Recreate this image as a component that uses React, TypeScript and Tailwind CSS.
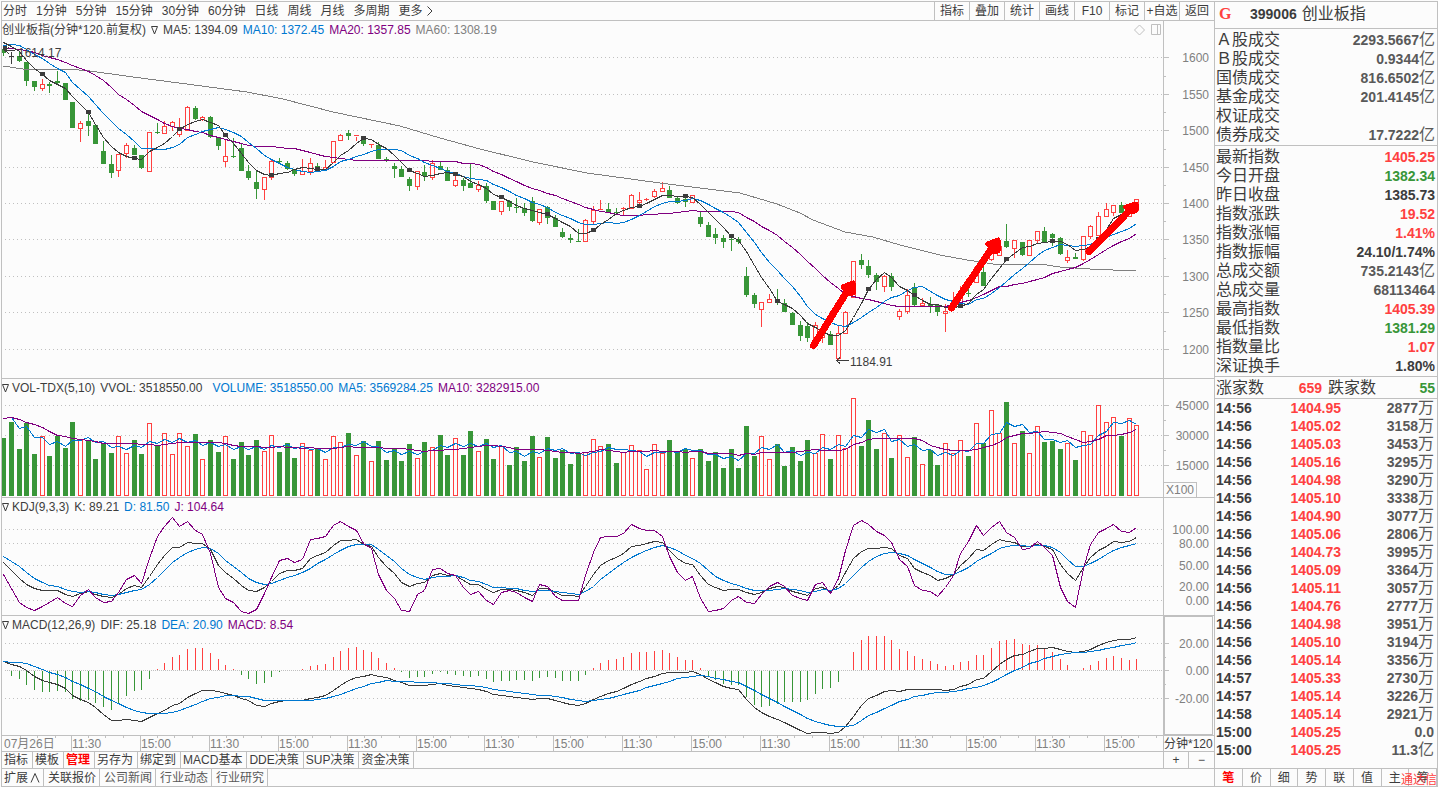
import * as React from "react";
import clsx from "clsx";

const RED = "#ff4040";
const GREEN = "#389638";
const DARK = "#3c3c3c";
const BLUE = "#0078d0";
const PURPLE = "#800080";
const GRAY = "#808080";
const LINE = "#c0c0c0";

const PLOT_LEFT = 2;
const PLOT_WIDTH = 1161;

// [direction, high, top, bottom, low]
type Candle = [number, number, number, number, number];

const CANDLES: Candle[] = [
  [-1, 48, 49, 53, 56], [0, 52, 56, 57, 64], [-1, 52, 56, 61, 62], [-1, 62, 62, 81, 86],
  [-1, 81, 81, 87, 91], [1, 79, 84, 89, 91], [-1, 82, 84, 86, 93], [-1, 71, 81, 83, 84],
  [-1, 83, 83, 100, 100], [-1, 102, 102, 128, 128], [1, 121, 123, 129, 142], [-1, 112, 121, 126, 136],
  [-1, 125, 125, 144, 144], [-1, 141, 151, 164, 164], [-1, 155, 164, 173, 178], [1, 154, 154, 171, 177],
  [1, 143, 145, 154, 158], [-1, 145, 148, 155, 155], [-1, 155, 155, 168, 169], [1, 132, 132, 172, 172],
  [-1, 123, 132, 133, 134], [1, 121, 126, 134, 134], [1, 121, 122, 127, 131], [1, 118, 130, 135, 137],
  [1, 106, 107, 131, 131], [-1, 106, 108, 119, 120], [1, 116, 117, 120, 121], [-1, 116, 117, 137, 138],
  [-1, 137, 137, 146, 150], [1, 139, 156, 162, 167], [-1, 138, 156, 157, 158], [-1, 143, 148, 171, 171],
  [-1, 165, 171, 178, 180], [-1, 171, 182, 189, 199], [1, 177, 177, 190, 200], [1, 159, 161, 178, 180],
  [-1, 158, 161, 162, 163], [-1, 161, 163, 169, 170], [-1, 169, 169, 174, 176], [1, 159, 171, 175, 175],
  [1, 158, 163, 172, 175], [-1, 163, 166, 170, 171], [1, 160, 167, 170, 170], [1, 141, 141, 163, 163],
  [1, 134, 135, 141, 141], [-1, 130, 133, 136, 140], [1, 135, 135, 137, 141], [-1, 137, 137, 144, 146],
  [1, 144, 144, 145, 148], [-1, 142, 145, 159, 159], [-1, 157, 159, 160, 162], [-1, 163, 166, 169, 178],
  [-1, 166, 169, 177, 177], [-1, 177, 179, 186, 191], [1, 171, 171, 187, 190], [-1, 165, 172, 176, 181],
  [1, 160, 163, 178, 180], [-1, 161, 166, 170, 170], [-1, 167, 170, 181, 181], [1, 173, 180, 186, 187],
  [-1, 178, 180, 186, 191], [-1, 164, 183, 188, 188], [1, 181, 185, 190, 192], [-1, 183, 186, 201, 203],
  [-1, 201, 201, 210, 210], [1, 201, 201, 212, 215], [-1, 200, 201, 207, 211], [-1, 198, 207, 208, 213],
  [-1, 203, 208, 213, 216], [-1, 197, 201, 221, 222], [1, 209, 209, 223, 225], [-1, 206, 207, 218, 224],
  [-1, 215, 218, 227, 227], [-1, 228, 232, 237, 238], [-1, 234, 238, 240, 243], [-1, 229, 241, 242, 242],
  [1, 219, 220, 242, 242], [1, 206, 210, 222, 224], [1, 200, 209, 210, 210], [-1, 203, 209, 212, 212],
  [-1, 208, 212, 213, 214], [1, 207, 208, 209, 216], [1, 194, 195, 209, 209], [1, 192, 200, 203, 205],
  [1, 198, 199, 200, 201], [1, 189, 191, 197, 198], [1, 182, 188, 192, 192], [-1, 186, 190, 198, 198],
  [-1, 196, 198, 203, 204], [-1, 198, 199, 202, 207], [1, 195, 195, 203, 203], [-1, 212, 217, 224, 227],
  [-1, 222, 225, 237, 237], [-1, 228, 234, 238, 244], [-1, 235, 238, 242, 248], [-1, 236, 239, 240, 251],
  [-1, 237, 239, 242, 244], [-1, 267, 276, 295, 297], [-1, 293, 295, 304, 308], [1, 302, 302, 310, 327],
  [1, 294, 299, 303, 303], [-1, 289, 300, 303, 305], [-1, 299, 303, 312, 312], [-1, 312, 313, 325, 325],
  [-1, 321, 325, 336, 341], [-1, 322, 326, 338, 342], [1, 322, 325, 339, 340], [1, 330, 333, 338, 343],
  [-1, 331, 334, 345, 345], [1, 325, 333, 359, 360], [1, 311, 312, 334, 334], [1, 261, 261, 298, 298],
  [-1, 254, 260, 265, 269], [-1, 260, 266, 275, 278], [-1, 273, 275, 282, 290], [1, 275, 276, 287, 292],
  [-1, 273, 276, 287, 291], [1, 309, 311, 317, 320], [1, 289, 295, 312, 314], [-1, 283, 287, 305, 306],
  [1, 298, 303, 306, 306], [-1, 297, 304, 306, 313], [-1, 304, 305, 312, 316], [1, 304, 311, 314, 332],
  [1, 292, 302, 307, 307], [1, 286, 297, 304, 304], [-1, 287, 293, 294, 297], [1, 265, 267, 283, 283],
  [-1, 267, 272, 286, 286], [1, 240, 247, 260, 261], [1, 240, 246, 256, 256], [-1, 224, 241, 247, 248],
  [1, 240, 240, 249, 258], [-1, 242, 242, 255, 256], [1, 240, 240, 256, 256], [1, 231, 231, 241, 243],
  [-1, 227, 231, 242, 242], [-1, 233, 234, 238, 246], [-1, 237, 238, 254, 255], [1, 250, 257, 261, 263],
  [-1, 253, 257, 259, 259], [1, 236, 236, 260, 261], [1, 225, 226, 237, 239], [1, 212, 216, 236, 236],
  [1, 203, 209, 217, 217], [1, 205, 205, 213, 216], [-1, 202, 205, 213, 213], [1, 205, 205, 217, 217],
  [1, 199, 199, 211, 211],
];

const VOLUMES = [
  57, 73, 46, 72, 41, 59, 39, 59, 47, 73, 56, 54, 36, 52, 42, 59, 42, 55, 41, 72,
  50, 62, 41, 62, 49, 61, 36, 55, 43, 59, 36, 53, 40, 55, 44, 60, 43, 52, 37, 52,
  45, 47, 36, 59, 53, 62, 40, 54, 34, 54, 35, 47, 34, 51, 37, 53, 48, 60, 40, 57,
  40, 64, 44, 56, 36, 49, 30, 48, 34, 59, 38, 58, 37, 45, 31, 42, 43, 56, 49, 51,
  32, 43, 50, 45, 26, 51, 42, 55, 43, 46, 37, 46, 34, 43, 27, 46, 27, 69, 39, 59,
  36, 51, 29, 48, 34, 55, 42, 61, 36, 60, 47, 97, 49, 75, 46, 62, 37, 60, 38, 58,
  31, 45, 30, 52, 42, 55, 39, 72, 52, 85, 62, 93, 52, 64, 42, 69, 53, 54, 46, 52,
  35, 64, 60, 90, 73, 78, 59, 77, 70,
];

const J_LINE = [
  574, 588, 602, 607, 610, 606, 602, 597, 603, 606, 595, 589, 597, 602, 601, 592, 579, 575, 583, 558,
  536, 526, 517, 526, 521, 530, 534, 553, 587, 598, 602, 611, 613, 609, 593, 577, 560, 558, 562, 559,
  539, 538, 536, 525, 521, 526, 530, 543, 548, 574, 590, 598, 610, 611, 594, 590, 569, 568, 573, 575,
  587, 594, 591, 600, 604, 592, 590, 592, 597, 601, 584, 586, 596, 600, 600, 600, 575, 552, 537, 536,
  536, 533, 524, 528, 530, 530, 536, 556, 572, 580, 576, 598, 611, 610, 608, 600, 596, 602, 603, 594,
  586, 582, 586, 595, 598, 600, 584, 582, 593, 578, 550, 525, 520, 524, 531, 535, 542, 559, 566, 585,
  590, 591, 596, 587, 575, 553, 541, 525, 535, 527, 521, 532, 537, 549, 548, 541, 547, 555, 587, 601,
  607, 568, 544, 532, 528, 524, 531, 532, 527,
];

const MACD_BARS = [
  0, -5, -8, -14, -19, -21, -21, -20, -21, -28, -30, -29, -32, -36, -39, -33, -25, -20, -19, -8,
  1, 7, 13, 15, 21, 22, 22, 17, 11, 5, 1, -4, -8, -13, -12, -6, -1, 0, 0, 1,
  4, 5, 6, 13, 19, 22, 23, 20, 18, 12, 7, 2, -1, -7, -6, -6, -3, -1, -3, -4,
  -5, -6, -5, -8, -11, -10, -10, -9, -9, -10, -7, -6, -7, -10, -10, -10, -4, 2, 7, 10,
  11, 13, 17, 18, 18, 19, 20, 17, 13, 10, 10, 2, -5, -9, -13, -14, -14, -26, -34, -36,
  -35, -33, -31, -31, -31, -29, -23, -18, -17, -11, 0, 18, 30, 34, 34, 34, 30, 21, 19, 14,
  11, 9, 6, 4, 5, 8, 9, 15, 15, 22, 29, 30, 31, 26, 25, 25, 21, 18, 11, 5,
  0, 2, 5, 9, 12, 14, 12, 10, 11,
];

// [bar index, y]
const DEA_KEYS: [number, number][] = [
  [0, 661], [3, 663], [5, 669], [8, 677], [12, 691], [14, 700], [17, 710], [19, 713], [21, 713], [23, 710],
  [25, 704], [27, 698], [29, 695], [32, 696], [34, 700], [40, 700], [42, 698], [44, 694], [46, 688], [48, 683],
  [50, 680], [52, 681], [58, 683], [62, 686], [65, 690], [69, 694], [72, 696], [76, 701], [78, 699], [80, 696],
  [82, 692], [84, 687], [86, 683], [88, 678], [91, 675], [94, 679], [96, 682], [98, 690], [100, 698], [103, 710],
  [105, 718], [107, 723], [109, 726], [110, 726], [111, 725], [113, 715], [115, 708], [117, 701], [119, 696],
  [122, 692], [124, 691], [126, 688], [128, 685], [130, 678], [132, 670], [134, 663], [136, 658], [138, 654],
  [140, 652], [141, 652], [142, 651], [144, 648], [146, 645], [148, 642],
];

const MA60_POINTS =
  "3,66 23,69 43,70 67,69 90,71 133,77 179,83 247,92 283,99 333,112 400,126 440,138 480,149 533,162 587,173 660,183 740,193 777,204 800,213 813,220 845,232 873,237 900,245 940,255 967,260 993,264 1023,265 1040,264 1060,267 1090,269 1136,271";

const barX = (i: number) => Math.round(3.4 + 7.655 * i);

const toPoints = (ys: number[]) =>
  ys.map((y, i) => `${barX(i) + 0.5},${Math.round(y) + 0.5}`).join(" ");

// Moving average, with the first values given because they depend on older bars
const average = (values: number[], size: number, seed: number[]) =>
  values.map((_, i) => {
    if (i < size - 1) return seed[i];
    let sum = 0;
    for (let k = i - size + 1; k <= i; k++) sum += values[k];
    return sum / size;
  });

const interpolate = (keys: [number, number][]) =>
  MACD_BARS.map((_, i) => {
    const next = Math.max(1, keys.findIndex(([k]) => k >= i));
    const [x0, y0] = keys[next - 1];
    const [x1, y1] = keys[next];
    return y0 + ((y1 - y0) * (i - x0)) / (x1 - x0);
  });

const closes = CANDLES.map(([dir, , top, bottom]) => (dir > 0 ? top : bottom));
const ma5 = average(closes, 5, [42, 46, 51, 60]);
const ma10 = average(closes, 10, [45, 44, 45, 49, 54, 58, 63, 68, 72]);
const ma20 = average(
  closes,
  20,
  [48, 48, 49, 50, 52, 55, 57, 59, 62, 65, 68, 71, 75, 80, 87, 94, 99, 105, 111],
);
const volMa5 = average(VOLUMES, 5, [77, 78, 67, 69]);
const volMa10 = average(VOLUMES, 10, [77, 78, 76, 73, 71, 68, 64, 60, 59]);

const dLine = J_LINE.reduce<number[]>(
  (acc, j, i) => [...acc, i === 0 ? 556 : (6 * acc[i - 1] + j) / 7],
  [],
);
const kLine = J_LINE.map((j, i) => (j + 2 * dLine[i]) / 3);

const deaLine = interpolate(DEA_KEYS);
const difLine = deaLine.map((y, i) => y - MACD_BARS[i] / 2);

const Grid: React.FC<{ rows: number[] }> = ({ rows }) => (
  <>
    {rows.map((y) => (
      <line
        key={y}
        x1={5}
        x2={1163}
        y1={y + 0.5}
        y2={y + 0.5}
        stroke={LINE}
        strokeDasharray="1 3"
      />
    ))}
  </>
);

const Curve: React.FC<{ points: string; color: string }> = ({ points, color }) => (
  <polyline points={points} fill="none" stroke={color} />
);

const Plot: React.FC<
  React.PropsWithChildren<{ top: number; height: number; className: string; label: string }>
> = ({ top, height, className, label, children }) => (
  <svg
    role="img"
    aria-label={label}
    viewBox={`${PLOT_LEFT} ${top} ${PLOT_WIDTH} ${height}`}
    preserveAspectRatio="none"
    shapeRendering="crispEdges"
    className={clsx("block w-full", className)}
  >
    {children}
  </svg>
);

type Tick = { y: number; text: string };

const Axis: React.FC<
  React.PropsWithChildren<{
    top: number;
    height: number;
    className: string;
    ticks: Tick[];
    minor?: number[];
    marks?: boolean;
  }>
> = ({ top, height, className, ticks, minor = [], marks = true, children }) => (
  <svg
    viewBox={`1164 ${top} 50 ${height}`}
    shapeRendering="crispEdges"
    className={clsx("block w-[50px]", className)}
  >
    {ticks.map(({ y, text }) => (
      <React.Fragment key={y}>
        {marks && <rect x={1164} y={y} width={5} height={1} fill={LINE} />}
        <text x={1209} y={y + 5} textAnchor="end" fill={GRAY} className="text-xs">
          {text}
        </text>
      </React.Fragment>
    ))}
    {minor.map((y) => (
      <rect key={y} x={1164} y={y} width={2} height={1} fill={LINE} />
    ))}
    {children}
  </svg>
);

const Pane: React.FC<
  React.PropsWithChildren<{ axis: React.ReactNode; heading: React.ReactNode }>
> = ({ axis, heading, children }) => (
  <section className="flex border-b border-[#c0c0c0]">
    <div className="flex-1 min-w-0">
      <div className="h-[18px] flex items-center gap-[5px] whitespace-nowrap">{heading}</div>
      {children}
    </div>
    <div className="border-l border-[#c0c0c0]">{axis}</div>
  </section>
);

const Triangle = () => (
  <svg viewBox="0 0 7 9" className="w-[7px] h-[9px] shrink-0" fill="none" stroke={DARK}>
    <path d="M0.5 0.5h6L3.5 8z" />
  </svg>
);

const RedArrow: React.FC<{ shaft: string; head: string }> = ({ shaft, head }) => (
  <g stroke="#ff0000" fill="#ff0000" strokeLinecap="round" strokeLinejoin="round">
    <path d={shaft} strokeWidth={7} />
    <path d={head} strokeWidth={5} />
  </g>
);

const Candles = () => (
  <>
    {CANDLES.map(([dir, high, top, bottom, low], i) => {
      const x = barX(i);
      if (dir > 0) {
        return (
          <g key={i} fill={RED}>
            <rect x={x} y={high} width={1} height={Math.max(0, top - high)} />
            <rect x={x} y={bottom} width={1} height={Math.max(0, low - bottom)} />
            {bottom - top > 2 ? (
              <rect x={x - 1.5} y={top + 0.5} width={4} height={bottom - top - 1} fill="none" stroke={RED} />
            ) : (
              <rect x={x - 2} y={top} width={5} height={1} />
            )}
          </g>
        );
      }
      return (
        <g key={i} fill={dir < 0 ? GREEN : DARK}>
          <rect x={x} y={high} width={1} height={low - high} />
          <rect x={x - 2} y={top} width={5} height={bottom - top} />
        </g>
      );
    })}
  </>
);

const PricePane = () => (
  <Pane
    heading={
      <>
        <span>创业板指(分钟*120.前复权)</span>
        <Triangle />
        <span>MA5: 1394.09</span>
        <span className="text-[#0078d0]">MA10: 1372.45</span>
        <span className="text-[#800080]">MA20: 1357.85</span>
        <span className="text-[#808080]">MA60: 1308.19</span>
        <svg viewBox="0 0 28 12" className="ml-auto mr-px w-7 h-3" fill="none" stroke={LINE}>
          <path d="M0.5 6L5.5 1l5 5-5 5z" />
          <path d="M17.5 0.5h9v10h-9zM23.5 0.5v10" />
        </svg>
      </>
    }
    axis={
      <Axis
        top={21}
        height={357}
        className="h-[357px]"
        ticks={[57, 94, 130, 167, 203, 239, 276, 312, 349].map((y, i) => ({
          y,
          text: String(1600 - i * 50),
        }))}
        minor={[76, 112, 149, 185, 221, 258, 294, 331]}
      />
    }
  >
    <Plot top={39} height={339} className="h-[339px]" label="Price">
      <Grid rows={[57, 94, 130, 167, 203, 239, 276, 312, 349]} />
      <Candles />
      <Curve points={MA60_POINTS} color={GRAY} />
      <Curve points={toPoints(ma20)} color={PURPLE} />
      <Curve points={toPoints(ma10)} color={BLUE} />
      <Curve points={toPoints(ma5)} color={DARK} />
      <rect x={3} y={46} width={4} height={4} fill={DARK} />
      {ma5.map((y, i) =>
        i % 6 === 5 ? (
          <rect key={i} x={barX(i) - 2} y={Math.round(y) - 2} width={5} height={4} fill={DARK} />
        ) : null,
      )}
      <g stroke={DARK} fill="none">
        <path d="M6 50.5h9M9 47l-4 3.5L9 54" />
        <path d="M837 360.5h12M840 357.5l-3.5 3 3.5 3" />
      </g>
      <text x={18} y={57} fill={DARK} className="text-xs">
        1614.17
      </text>
      <text x={850} y={366} fill={DARK} className="text-xs">
        1184.91
      </text>
      <RedArrow shaft="M813.5 345.5L848 290" head="M843 287l10-4 1 9-4 2z" />
      <RedArrow shaft="M951.5 308L992 248" head="M988 244l10-4v11l-4 1z" />
      <RedArrow shaft="M1089 251.5L1130 210" head="M1126 207l10-3v6l-3 2z" />
    </Plot>
  </Pane>
);

const VolumePane = () => (
  <Pane
    heading={
      <>
        <span className="flex items-center gap-[3px]">
          <Triangle />
          VOL-TDX(5,10)
        </span>
        <span className="mr-[5px]">VVOL: 3518550.00</span>
        <span className="text-[#0078d0]">VOLUME: 3518550.00</span>
        <span className="text-[#0078d0]">MA5: 3569284.25</span>
        <span className="text-[#800080]">MA10: 3282915.00</span>
      </>
    }
    axis={
      <Axis
        top={379}
        height={118}
        className="h-[118px]"
        ticks={[
          { y: 405, text: "45000" },
          { y: 435, text: "30000" },
          { y: 465, text: "15000" },
        ]}
        minor={[420, 450]}
      >
        <path d="M1164 482.5h32.5v15" fill="none" stroke={LINE} />
        <text x={1166} y={494} fill={GRAY} className="text-xs">
          X100
        </text>
      </Axis>
    }
  >
    <Plot top={397} height={100} className="h-[100px]" label="Volume">
      <Grid rows={[405, 435, 465]} />
      {VOLUMES.map((h, i) =>
        CANDLES[i][0] > 0 ? (
          <rect
            key={i}
            x={barX(i) - 1.5}
            y={495.5 - h}
            width={4}
            height={h}
            fill="#fcfcfc"
            stroke={RED}
          />
        ) : (
          <rect key={i} x={barX(i) - 2} y={495 - h} width={5} height={h + 1} fill={GREEN} />
        ),
      )}
      <Curve points={toPoints(volMa5.map((h) => 495 - h))} color={BLUE} />
      <Curve points={toPoints(volMa10.map((h) => 495 - h))} color={PURPLE} />
    </Plot>
  </Pane>
);

const KdjPane = () => (
  <Pane
    heading={
      <>
        <span className="flex items-center gap-[3px]">
          <Triangle />
          KDJ(9,3,3)
        </span>
        <span>K: 89.21</span>
        <span className="text-[#0078d0]">D: 81.50</span>
        <span className="text-[#800080]">J: 104.64</span>
      </>
    }
    axis={
      <Axis
        top={498}
        height={117}
        className="h-[117px]"
        marks={false}
        ticks={[
          { y: 529, text: "100.00" },
          { y: 543, text: "80.00" },
          { y: 565, text: "50.00" },
          { y: 586, text: "20.00" },
          { y: 600, text: "0.00" },
        ]}
      />
    }
  >
    <Plot top={516} height={99} className="h-[99px]" label="KDJ">
      <Grid rows={[529, 543, 565, 586, 600]} />
      <Curve points={toPoints(kLine)} color={DARK} />
      <Curve points={toPoints(dLine)} color={BLUE} />
      <Curve points={toPoints(J_LINE)} color={PURPLE} />
    </Plot>
  </Pane>
);

const MacdPane = () => (
  <Pane
    heading={
      <>
        <span className="flex items-center gap-[3px]">
          <Triangle />
          MACD(12,26,9)
        </span>
        <span>DIF: 25.18</span>
        <span className="text-[#0078d0]">DEA: 20.90</span>
        <span className="text-[#800080]">MACD: 8.54</span>
      </>
    }
    axis={
      <Axis
        top={616}
        height={119}
        className="h-[119px]"
        ticks={[
          { y: 643, text: "20.00" },
          { y: 670, text: "0.00" },
          { y: 698, text: "-20.00" },
        ]}
        minor={[657, 684]}
      >
        <rect x={1164.5} y={616.5} width={48} height={118} fill="none" stroke={LINE} />
      </Axis>
    }
  >
    <Plot top={634} height={101} className="h-[101px]" label="MACD">
      <Grid rows={[643, 698]} />
      <line x1={5} x2={1163} y1={670.5} y2={670.5} stroke={LINE} strokeDasharray="1 1" />
      {MACD_BARS.map((h, i) => (
        <rect
          key={i}
          x={barX(i)}
          y={h > 0 ? 670 - h : 671}
          width={1}
          height={Math.abs(h)}
          fill={h > 0 ? RED : GREEN}
        />
      ))}
      <Curve points={toPoints(difLine)} color={DARK} />
      <Curve points={toPoints(deaLine)} color={BLUE} />
    </Plot>
  </Pane>
);

const TimeAxis = () => (
  <div className="flex border-b border-[#c0c0c0]">
    <div className="flex-1 min-w-0">
      <Plot top={736} height={15} className="h-[15px]" label="Time">
        {Array.from({ length: 17 }, (_, i) => {
          const x = Math.round(2.5 + 68.85 * i);
          return (
            <g key={i}>
              {i > 0 && <rect x={x} y={736} width={1} height={15} fill={LINE} />}
              {[17, 34, 52].map((d) => (
                <rect key={d} x={x + d} y={736} width={1} height={2} fill={LINE} />
              ))}
              <text x={x + 1} y={748} fill={GRAY} className="text-xs">
                {i === 0 ? "07月26日" : i % 2 ? "11:30" : "15:00"}
              </text>
            </g>
          );
        })}
      </Plot>
    </div>
    <div className="w-[51px] h-[15px] flex items-center whitespace-nowrap border-l border-[#c0c0c0]">
      分钟*120
    </div>
  </div>
);

const PERIODS = ["分时", "1分钟", "5分钟", "15分钟", "30分钟", "60分钟", "日线", "周线", "月线", "多周期"];
const TOOLS = ["指标", "叠加", "统计", "画线", "F10", "标记", "+自选", "返回"];

const Toolbar = () => (
  <nav className="h-[19px] flex border-b border-[#c0c0c0] whitespace-nowrap">
    <div className="flex-1 flex items-center gap-[9px] pl-px">
      {PERIODS.map((name) => (
        <button key={name}>{name}</button>
      ))}
      <button className="flex items-center gap-1">
        更多
        <svg viewBox="0 0 6 10" className="w-1.5 h-2.5" fill="none" stroke={DARK}>
          <path d="M0.5 0.5L5 5 0.5 9.5" />
        </svg>
      </button>
    </div>
    {TOOLS.map((name) => (
      <button key={name} className="w-[35px] border-l border-[#c0c0c0]">
        {name}
      </button>
    ))}
  </nav>
);

const TEMPLATES = ["指标", "模板", "管理", "另存为", "绑定到", "MACD基本", "DDE决策", "SUP决策", "资金决策"];
const LINKS = ["关联报价", "公司新闻", "行业动态", "行业研究"];

const BottomTabs = () => (
  <>
    <div className="h-[17px] flex border-b border-[#c0c0c0] whitespace-nowrap">
      <div className="flex-1 flex">
        {TEMPLATES.map((name) => (
          <button
            key={name}
            className={clsx(
              "pl-0.5 pr-1 border-r border-[#c0c0c0]",
              name === "管理" && "font-bold text-[#ff0000]",
            )}
          >
            {name}
          </button>
        ))}
      </div>
      <button aria-label="Zoom in" className="w-[25px] border-l border-[#c0c0c0]">
        +
      </button>
      <button aria-label="Zoom out" className="w-[26px] border-l border-[#c0c0c0]">
        −
      </button>
    </div>
    <div className="h-[18px] flex border-b border-[#c0c0c0] whitespace-nowrap">
      <button className="flex items-center gap-0.5 pl-0.5 pr-[3px] border-r border-[#c0c0c0]">
        扩展
        <svg viewBox="0 0 10 10" className="w-2.5 h-2.5" fill="none" stroke={DARK}>
          <path d="M1 9.5L5 0.5l4 9" />
        </svg>
      </button>
      {LINKS.map((name, i) => (
        <button
          key={name}
          className={clsx("pl-1 pr-[3px] border-r border-[#c0c0c0]", i > 0 && "text-[#595959]")}
        >
          {name}
        </button>
      ))}
    </div>
  </>
);

type Quote = { name: string; value: string; unit?: string; tone: string };

const TURNOVER: Quote[] = [
  { name: "Ａ股成交", value: "2293.5667", unit: "亿", tone: "text-[#595959]" },
  { name: "Ｂ股成交", value: "0.9344", unit: "亿", tone: "text-[#595959]" },
  { name: "国债成交", value: "816.6502", unit: "亿", tone: "text-[#595959]" },
  { name: "基金成交", value: "201.4145", unit: "亿", tone: "text-[#595959]" },
  { name: "权证成交", value: "", tone: "text-[#595959]" },
  { name: "债券成交", value: "17.7222", unit: "亿", tone: "text-[#595959]" },
];

const QUOTES: Quote[] = [
  { name: "最新指数", value: "1405.25", tone: "text-[#ff4040]" },
  { name: "今日开盘", value: "1382.34", tone: "text-[#389638]" },
  { name: "昨日收盘", value: "1385.73", tone: "text-[#3c3c3c]" },
  { name: "指数涨跌", value: "19.52", tone: "text-[#ff4040]" },
  { name: "指数涨幅", value: "1.41%", tone: "text-[#ff4040]" },
  { name: "指数振幅", value: "24.10/1.74%", tone: "text-[#3c3c3c]" },
  { name: "总成交额", value: "735.2143", unit: "亿", tone: "text-[#595959]" },
  { name: "总成交量", value: "68113464", tone: "text-[#595959]" },
  { name: "最高指数", value: "1405.39", tone: "text-[#ff4040]" },
  { name: "最低指数", value: "1381.29", tone: "text-[#389638]" },
  { name: "指数量比", value: "1.07", tone: "text-[#ff4040]" },
  { name: "深证换手", value: "1.80%", tone: "text-[#3c3c3c]" },
];

const DEALS: [string, string, string, string][] = [
  ["14:56", "1404.95", "2877", "万"],
  ["14:56", "1405.02", "3158", "万"],
  ["14:56", "1405.03", "3453", "万"],
  ["14:56", "1405.16", "3295", "万"],
  ["14:56", "1404.98", "3290", "万"],
  ["14:56", "1405.10", "3338", "万"],
  ["14:56", "1404.90", "3077", "万"],
  ["14:56", "1405.06", "2806", "万"],
  ["14:56", "1404.73", "3995", "万"],
  ["14:56", "1405.09", "3364", "万"],
  ["14:56", "1405.11", "3057", "万"],
  ["14:56", "1404.76", "2777", "万"],
  ["14:56", "1404.98", "3951", "万"],
  ["14:56", "1405.10", "3194", "万"],
  ["14:56", "1405.14", "3356", "万"],
  ["14:57", "1405.33", "2730", "万"],
  ["14:57", "1405.14", "3226", "万"],
  ["14:58", "1405.14", "2921", "万"],
  ["15:00", "1405.25", "0.0", ""],
  ["15:00", "1405.25", "11.3", "亿"],
];

const QuoteTable: React.FC<{ rows: Quote[] }> = ({ rows }) => (
  <div className="py-px border-b border-[#c0c0c0]">
    <table className="w-full">
      <tbody>
        {rows.map(({ name, value, unit, tone }) => (
          <tr key={name} className="h-[19px]">
            <th scope="row" className="p-0 pl-px text-left text-base leading-none font-normal">
              {name}
            </th>
            <td className={clsx("p-0 pr-0.5 text-right text-sm leading-none font-bold", tone)}>
              {value}
              <span className="text-base leading-none font-normal">{unit}</span>
            </td>
          </tr>
        ))}
      </tbody>
    </table>
  </div>
);

const SIDE_TABS = ["笔", "价", "细", "势", "联", "值", "主", "筹"];

const Sidebar = () => (
  <aside className="w-[224px] shrink-0 flex flex-col border-x border-[#c0c0c0]">
    <h1 className="h-[27px] pl-1 pb-0.5 flex items-center text-sm leading-none font-bold border-b border-[#c0c0c0]">
      <span className="w-[31px] font-['Liberation_Serif'] text-base leading-none text-[#ff4040]">G</span>
      399006
      <span className="ml-[5px] text-base leading-none font-normal">创业板指</span>
    </h1>
    <QuoteTable rows={TURNOVER} />
    <QuoteTable rows={QUOTES} />
    <div className="h-[22px] flex items-center pl-px pr-0.5 text-base leading-none border-b border-[#c0c0c0]">
      涨家数
      <span className="w-[58px] mr-1.5 text-right text-sm leading-none font-bold text-[#ff4040]">659</span>
      跌家数
      <span className="ml-auto text-sm leading-none font-bold text-[#389638]">55</span>
    </div>
    <div className="flex-1">
      <table className="w-full text-sm font-bold">
        <tbody>
          {DEALS.map(([time, price, amount, unit], i) => (
            <tr key={i} className="h-[18px]">
              <td className="p-0 pl-px w-[46px] leading-none">{time}</td>
              <td className="p-0 w-20 leading-none text-right text-[#ff4040]">{price}</td>
              <td className="p-0 pr-[3px] leading-none text-right text-[#595959]">
                {amount}
                <span className="text-base leading-none font-normal">{unit}</span>
              </td>
            </tr>
          ))}
        </tbody>
      </table>
    </div>
    <div className="relative h-[19px] flex border-y border-[#c0c0c0]">
      {SIDE_TABS.map((name) => (
        <button
          key={name}
          className={clsx(
            "flex-1 border-r border-[#c0c0c0] last:border-r-0",
            name === "笔" && "font-bold text-[#ff0000]",
          )}
        >
          {name}
        </button>
      ))}
      <span className="absolute right-0 bottom-0 leading-none text-[#ff4040]">通达信</span>
    </div>
  </aside>
);

export default function App() {
  return (
    <div className="min-h-screen flex bg-[#fcfcfc] pt-px text-xs leading-none text-[#3c3c3c] font-['Liberation_Sans','Noto_Sans_CJK_SC',sans-serif]">
      <main className="flex-1 min-w-0 ml-px border-t border-l border-[#c0c0c0]">
        <Toolbar />
        <PricePane />
        <VolumePane />
        <KdjPane />
        <MacdPane />
        <TimeAxis />
        <BottomTabs />
      </main>
      <div className="flex border-t border-[#c0c0c0]">
        <Sidebar />
      </div>
    </div>
  );
}
